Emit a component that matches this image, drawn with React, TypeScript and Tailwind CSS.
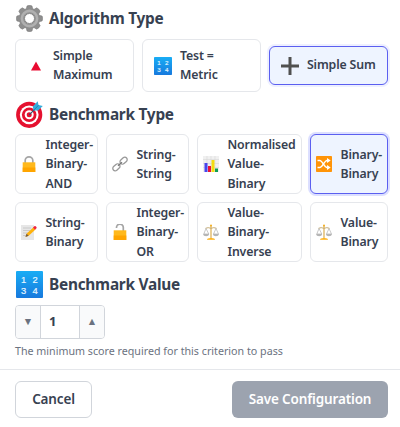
import type { ReactNode } from 'react';

function Gear() {
  return (
    <svg viewBox="0 0 27 27" className="size-[27px]">
      <g fill="#8e8e8e" stroke="#757575" strokeWidth=".5">
        {[0, 45, 90, 135, 180, 225, 270, 315].map((a) => (
          <path key={a} d="M10 5 11 .9Q13.5-.2 16 .9L17 5Z" transform={`rotate(${a} 13.5 13.5)`} />
        ))}
      </g>
      <circle cx="13.5" cy="13.5" r="7.9" fill="none" stroke="#8e8e8e" strokeWidth="5.4" />
      <circle cx="13.5" cy="13.5" r="7.6" fill="none" stroke="#b0b0b0" strokeWidth="2.6" />
      <circle cx="13.5" cy="13.5" r="5" fill="none" stroke="#7a7a7a" strokeWidth=".9" />
    </svg>
  );
}

function Target() {
  return (
    <svg viewBox="0 0 27 27" className="size-[27px]">
      <circle cx="13.2" cy="13.8" r="13.1" fill="#e5112f" />
      <circle cx="13.2" cy="13.8" r="9.4" fill="#fff" />
      <circle cx="13.2" cy="13.8" r="7.3" fill="#e5112f" />
      <circle cx="13.2" cy="13.8" r="4.5" fill="#fff" />
      <circle cx="13.2" cy="13.8" r="2.5" fill="#e5112f" />
      <path d="m13.2 13.8 7-7" stroke="#24566e" strokeWidth="1.1" />
      <path d="m17.5 9.5-.7-4L21.7.2 22.5 4l4.3 1-4.7 4.6Z" fill="#35addb" />
      <path d="m17.5 9.5 5-5.3" stroke="#1679a4" strokeWidth=".7" />
    </svg>
  );
}

function Numbers({ className }: { className: string }) {
  return (
    <svg viewBox="0 0 27 27" className={className}>
      <defs>
        <linearGradient id="blue" x2="0" y2="1">
          <stop stopColor="#19adf5" />
          <stop offset="1" stopColor="#1779dd" />
        </linearGradient>
      </defs>
      <rect width="27" height="27" rx="1" fill="url(#blue)" />
      <g fill="#e8f7ff" stroke="#e8f7ff" strokeWidth=".2" fontFamily="Liberation Sans, sans-serif" fontSize="9.4" fontWeight="400" letterSpacing="0" textAnchor="middle">
        <text x="7.5" y="11.5">1</text>
        <text x="19" y="11.5">2</text>
        <text x="7.5" y="22.5">3</text>
        <text x="19" y="22.5">4</text>
      </g>
    </svg>
  );
}

function Triangle() {
  return (
    <svg viewBox="0 0 18 18" className="size-[18px]">
      <path d="M9 4.5 14 13.5H4Z" fill="#e90b31" />
    </svg>
  );
}

function Plus() {
  return (
    <svg viewBox="0 0 18 18" className="size-[18px]">
      <path d="M7.5 0h3v7.5H18v3h-7.5V18h-3v-7.5H0v-3h7.5Z" fill="#505050" />
    </svg>
  );
}

function Lock({ open = false }: { open?: boolean }) {
  return (
    <svg viewBox="0 0 16 16" className="size-4">
      <path d={open ? 'M4.5 4V3.5a3.4 3.4 0 0 1 6.8 0V8' : 'M4.2 7V4.3a3.8 3.4 0 0 1 7.6 0V7'} fill="none" stroke="#a5a5a5" strokeWidth="1.7" />
      <path d="M1.7 6.3h12.6V16H1.7Z" fill="#ffb91c" />
      <path d="M1.7 11.5h12.6V16H1.7Z" fill="#ffa500" />
    </svg>
  );
}

function Chain() {
  return (
    <svg viewBox="0 0 16 16" className="size-4" fill="none" strokeWidth="1.3">
      <rect x="-4" y="-2.4" width="8" height="4.8" rx="2.4" transform="translate(4.4 11.3) rotate(-42)" stroke="#999" />
      <rect x="-4" y="-2.4" width="8" height="4.8" rx="2.4" transform="translate(11.6 4.7) rotate(-42)" stroke="#999" />
      <path d="m6 9.7 4-3.5" stroke="#777" />
    </svg>
  );
}

function Chart() {
  return (
    <svg viewBox="0 0 16 16" className="size-4">
      <rect width="16" height="16" fill="#f0f0f0" />
      <path d="M0 3.5h16M0 7.5h16M0 11.5h16M4 0v16M8 0v16M12 0v16" stroke="#d8d8d8" strokeWidth=".6" />
      <path d="M1.5 7H4.5v9H1.5Z" fill="#4945ed" />
      <path d="M5 10h3v6H5Z" fill="#eb1237" />
      <path d="M8.5 4h3v12h-3Z" fill="#f3dc10" />
      <path d="M12 12.5h3V16h-3Z" fill="#0c9d55" />
    </svg>
  );
}

function Shuffle() {
  return (
    <svg viewBox="0 0 16 16" className="size-4">
      <rect width="16" height="16" rx=".8" fill="#ff9408" />
      <g fill="none" stroke="#fff" strokeWidth="1.4">
        <path d="M1.5 4.5h2.3c2.5 0 4.7 7 7.2 7h1.5" />
        <path d="M1.5 11.5h2.3c2.5 0 4.7-7 7.2-7h1.5" />
      </g>
      <path d="m11 2 3.7 2.5L11 7ZM11 9l3.7 2.5L11 14Z" fill="#fff" />
    </svg>
  );
}

function Memo() {
  return (
    <svg viewBox="0 0 16 16" className="size-4">
      <path d="M0 1h13v15H0Z" fill="#e7e7e7" />
      <path d="M2 4h8M2 6.5h7M2 9h5M2 11.5h4" stroke="#bdbdbd" strokeWidth=".7" />
      <path d="m4.5 13 1-3.3 7-6.5 2 2.2-6.8 6.4Z" fill="#ffb20b" />
      <path d="m4.5 13 1-3.3 2.2 2.1Z" fill="#725c4b" />
      <path d="m12 3.5 1.3-1.2q1-.6 1.9.4t0 1.7L14 5.7Z" fill="#ef2342" />
    </svg>
  );
}

function Scales() {
  return (
    <svg viewBox="0 0 16 16" className="size-4" fill="none">
      <path d="M8 1v13" stroke="#d7a53d" strokeWidth="1.1" />
      <path d="M2.5 4.3Q5 3 8 4.3q3-1.3 5.5 0" stroke="#c2a56a" strokeWidth=".9" />
      <path d="M3 4.5.8 10h5ZM13 4.5 10.5 10h5Z" stroke="#aaa" strokeWidth=".65" />
      <path d="M0 10h6.2q-.3 2.2-3.1 2.2T0 10ZM9.8 10H16q-.3 2.2-3.1 2.2T9.8 10Z" fill="#b5b5b5" />
      <path d="M4 15.8q0-1.8 4-1.8t4 1.8Z" fill="#ffae0d" />
      <circle cx="8" cy="1.4" r="1" fill="#f5af20" />
    </svg>
  );
}

function Heading({ icon, children }: { icon: ReactNode; children: ReactNode }) {
  return (
    <h2 className="flex h-[27px] items-center gap-[6px] pl-px text-[15.4px] font-bold tracking-[-0.25px] whitespace-nowrap">
      {icon}
      <span>{children}</span>
    </h2>
  );
}

function Option({ icon, lines, small = false, selected = false, className }: { icon: ReactNode; lines: string[]; small?: boolean; selected?: boolean; className: string }) {
  return (
    <button
      className={`flex items-center rounded-[6px] border text-left text-[12.3px] font-semibold tracking-[-0.15px] whitespace-nowrap ${small ? 'pl-[5px] leading-[19.2px]' : 'pl-[10px] leading-[18.9px]'} ${selected ? 'border-[#5b5ff0] bg-[#eef4ff] ring-2 ' : 'border-[#e5e7eb] bg-white'} ${selected && small ? 'ring-[#dcdfff]' : ''} ${selected && !small ? 'ring-[#eef0ff]' : ''} ${className}`}
    >
      <span className={`flex shrink-0 justify-center ${small ? 'mr-[8.5px] w-4' : 'mr-[8px] w-[19px]'}`}>{icon}</span>
      <span>
        {lines.map((line) => (
          <span key={line} className="block">{line}</span>
        ))}
      </span>
    </button>
  );
}

export default function App() {
  return (
    <main className="h-[427px] w-[400px] overflow-hidden bg-white font-['Noto_Sans',sans-serif] text-[#374151]">
      <div className="h-[369px] pt-[5px] pr-3 pl-[15px]">
        <Heading icon={<Gear />}>Algorithm Type</Heading>
        <div className="mt-[7px] grid grid-cols-3 items-center gap-2">
          <Option className="h-[53px]" icon={<Triangle />} lines={['Simple', 'Maximum']} />
          <Option className="h-[53px]" icon={<Numbers className="size-[18px]" />} lines={['Test =', 'Metric']} />
          <Option className="h-[39px]" selected icon={<Plus />} lines={['Simple Sum']} />
        </div>
        <div className="mt-[9px]">
          <Heading icon={<Target />}>Benchmark Type</Heading>
        </div>
        <div className="mt-[6px] grid grid-cols-[83px_83px_105px_78px] gap-2">
          <Option small className="h-[60px]" icon={<Lock />} lines={['Integer-', 'Binary-', 'AND']} />
          <Option small className="h-[60px]" icon={<Chain />} lines={['String-', 'String']} />
          <Option small className="h-[60px]" icon={<Chart />} lines={['Normalised', 'Value-', 'Binary']} />
          <Option small selected className="h-[60px]" icon={<Shuffle />} lines={['Binary-', 'Binary']} />
          <Option small className="h-[60px]" icon={<Memo />} lines={['String-', 'Binary']} />
          <Option small className="h-[60px]" icon={<Lock open />} lines={['Integer-', 'Binary-', 'OR']} />
          <Option small className="h-[60px]" icon={<Scales />} lines={['Value-', 'Binary-', 'Inverse']} />
          <Option small className="h-[60px]" icon={<Scales />} lines={['Value-', 'Binary']} />
        </div>
        <div className="mt-[9px]">
          <Heading icon={<Numbers className="size-[27px]" />}>Benchmark Value</Heading>
        </div>
        <div className="mt-[7px] flex h-[34px] w-[90px] overflow-hidden rounded-[4px] border border-[#d1d5db]">
          <button className="flex w-[25px] items-center justify-center border-r border-[#d1d5db] bg-[#f9fafb] text-[10.5px] text-[#6b7280]">▼</button>
          <span className="flex flex-1 items-center pl-[8px] text-[13px] font-bold">1</span>
          <button className="flex w-[25px] items-center justify-center border-l border-[#d1d5db] bg-[#f9fafb] text-[10.5px] text-[#6b7280]">▲</button>
        </div>
        <p className="mt-1 text-[10.7px] leading-4 whitespace-nowrap text-[#6b7280]">The minimum score required for this criterion to pass</p>
      </div>
      <footer className="flex justify-between border-t border-[#e5e7eb] pt-[11px] pr-3 pl-[15px] text-[13.5px] font-semibold tracking-[-0.15px]">
        <button className="h-[37px] w-[77px] rounded-[6px] border border-[#d1d5db]">Cancel</button>
        <button className="h-[37px] w-[156px] rounded-[6px] bg-[#9ca3af] text-white">Save Configuration</button>
      </footer>
    </main>
  );
}
